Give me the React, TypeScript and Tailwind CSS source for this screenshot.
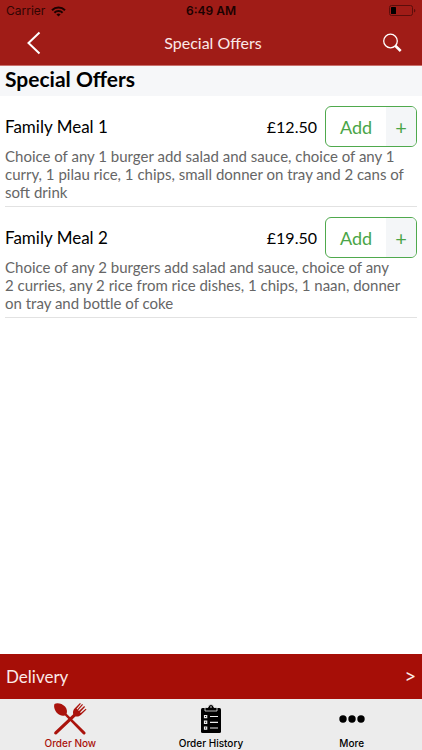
import React from "react";

type Meal = { name: string; price: string; lines: string[] };

const meals: Meal[] = [
  {
    name: "Family Meal 1",
    price: "£12.50",
    lines: [
      "Choice of any 1 burger add salad and sauce, choice of any 1",
      "curry, 1 pilau rice, 1 chips, small donner on tray and 2 cans of",
      "soft drink",
    ],
  },
  {
    name: "Family Meal 2",
    price: "£19.50",
    lines: [
      "Choice of any 2 burgers add salad and sauce, choice of any",
      "2 curries, any 2 rice from rice dishes, 1 chips, 1 naan, donner",
      "on tray and bottle of coke",
    ],
  },
];

function StatusBar() {
  return (
    <div className="grid h-5 grid-cols-3 items-center px-1.5 pt-0.5 font-[Inter,sans-serif] text-xs leading-4 text-[#300503]">
      <div className="flex items-center gap-1.5">
        <span>Carrier</span>
        <svg width="15" height="11" viewBox="0 0 15 11" fill="none" stroke="#1c0201" strokeWidth="2">
          <path d="M1 4.2a9.2 9.2 0 0 1 13 0" />
          <path d="M3.4 6.7a5.8 5.8 0 0 1 8.2 0" />
          <path d="M7.5 10.6 5.4 8.5a3 3 0 0 1 4.2 0z" fill="#1c0201" stroke="none" />
        </svg>
      </div>
      <span className="text-center font-semibold text-[#1c0201]">6:49 AM</span>
      <svg className="justify-self-end" width="27" height="12" viewBox="0 0 27 12">
        <rect x="0.5" y="0.5" width="23" height="10" rx="2" fill="none" stroke="#5c0e0b" />
        <rect x="2" y="2" width="5" height="7" rx="0.5" fill="#000" />
        <path d="M25 4v3.4q1.4-.4 1.4-1.7T25 4z" fill="#5c0e0b" />
      </svg>
    </div>
  );
}

function Header() {
  return (
    <header className="border-b border-[#c9706c] bg-[#a01c17]">
      <StatusBar />
      <div className="flex h-[45px] items-center justify-between pr-5 pl-6">
        <button aria-label="Back" className="flex w-5 justify-center">
          <svg width="14" height="24" viewBox="0 0 14 24" fill="none" stroke="#fff" strokeWidth="2">
            <path d="M12.500 1.500 1.500 12l11 10.500" />
          </svg>
        </button>
        <h1 className="text-base leading-5 text-[#fbe9e8]">Special Offers</h1>
        <button aria-label="Search" className="flex w-5 justify-center">
          <svg width="20" height="20" viewBox="0 0 20 20" fill="none" stroke="#fff">
            <circle cx="8.500" cy="8" r="6.800" strokeWidth="1.3" />
            <path d="m13.300 12.800 5.400 5.200" strokeWidth="2.600" />
          </svg>
        </button>
      </div>
    </header>
  );
}

function MealRow({ meal }: { meal: Meal }) {
  return (
    <li className="border-b border-[#e2e2e2] pt-2.5 pb-[5px]">
      <div className="flex items-center">
        <h3 className="flex-1 text-[17px] leading-5">{meal.name}</h3>
        <span className="mr-2 text-base leading-5">{meal.price}</span>
        <button className="flex h-[41px] w-[92px] overflow-hidden rounded-md border border-[#4fa94d] text-[#4aa548]">
          <span className="flex flex-1 items-center justify-center text-lg">Add</span>
          <span className="flex w-[30px] items-center justify-center bg-[#f4f6f8] text-xl">+</span>
        </button>
      </div>
      <p className="text-[15px] leading-[18px] whitespace-nowrap text-[#666]">
        {meal.lines.map((line) => (
          <span key={line} className="block">{line}</span>
        ))}
      </p>
    </li>
  );
}

function CutleryIcon() {
  return (
    <svg width="34" height="34" viewBox="0 0 34 34" fill="#aa130c">
      <path d="M1.500 2C4 .4 9.300 1.500 12 4.600c2 2.300 2.400 5 1.600 7.200L32.400 30.200q.6 1.600-.6 2.300-1 .3-1.900-.6L12 13.500c-2.800.7-5.600 0-7.700-2.200C1.700 8.700.4 4.500 1.500 2z" />
      <path d="M1.500 32.100q-1-1.100.2-2.300L20.200 12.200c-.6-2.400 0-4.300 1.600-5.900L27 .9l.9.8-4.300 5 .7.7L29.100 2l.9.8-4.800 5.400.7.700 5.300-4.900.8.900-4.900 5.300.7.700 4.900-4.200.8.900-5.400 5.100c-1.800 1.700-3.800 2.200-5.700 1.700L3.900 31.900q-1.300 1.200-2.400.2z" />
    </svg>
  );
}

function ClipboardIcon() {
  return (
    <svg width="22" height="30" viewBox="0 0 22 30">
      <path d="M2.500 4h17q1.500 0 1.500 1.500v22q0 1.500-1.500 1.500h-17Q1 29 1 27.500v-22Q1 4 2.500 4z" fill="#000" />
      <path d="M5 3.500h3Q8.500.5 11 .5t3 3h3v3.500H5z" fill="#000" stroke="#ececec" strokeWidth="0.800" />
      <circle cx="11" cy="3" r="0.800" fill="#ececec" />
      <g fill="none" stroke="#ececec" strokeWidth="1.200">
        <path d="M4.500 11.500h2.200v2.200H4.500zM4.500 17.200h2.200v2.200H4.500zM4.500 23h2.200v2.200H4.500zM10 12.500h8M10 18.300h8M10 24h8" />
      </g>
    </svg>
  );
}

function DotsIcon() {
  return (
    <svg width="26" height="8" viewBox="0 0 26 8">
      <circle cx="4" cy="4" r="3.700" />
      <circle cx="13" cy="4" r="3.700" />
      <circle cx="22" cy="4" r="3.700" />
    </svg>
  );
}

const tabs = [
  { label: "Order Now", icon: <CutleryIcon />, color: "text-[#aa130c]" },
  { label: "Order History", icon: <ClipboardIcon />, color: "text-black" },
  { label: "More", icon: <DotsIcon />, color: "text-black" },
];

export default function App() {
  return (
    <div className="flex min-h-screen flex-col bg-white font-[Lato,sans-serif] text-black">
      <Header />
      <main className="flex-1">
        <h2 className="bg-[#f6f7f9] px-[5px] pb-1 text-[21px] leading-[26px] font-bold">Special Offers</h2>
        <ul className="px-[5px]">
          {meals.map((meal) => (
            <MealRow key={meal.name} meal={meal} />
          ))}
        </ul>
      </main>
      <button className="flex h-[45px] items-center justify-between bg-[#a60e07] px-1.5 text-[17px] text-[#fbe9e8]">
        <span>Delivery</span>
        <span className="font-[Inter,sans-serif]">&gt;</span>
      </button>
      <nav className="grid h-[51px] grid-cols-3 bg-[#ececec]">
        {tabs.map((tab) => (
          <a key={tab.label} href="#" className={`flex flex-col items-center font-[Inter,sans-serif] text-[10px] leading-3 font-medium ${tab.color}`}>
            <span className="flex h-[38px] items-center pt-0.5">{tab.icon}</span>
            {tab.label}
          </a>
        ))}
      </nav>
    </div>
  );
}
